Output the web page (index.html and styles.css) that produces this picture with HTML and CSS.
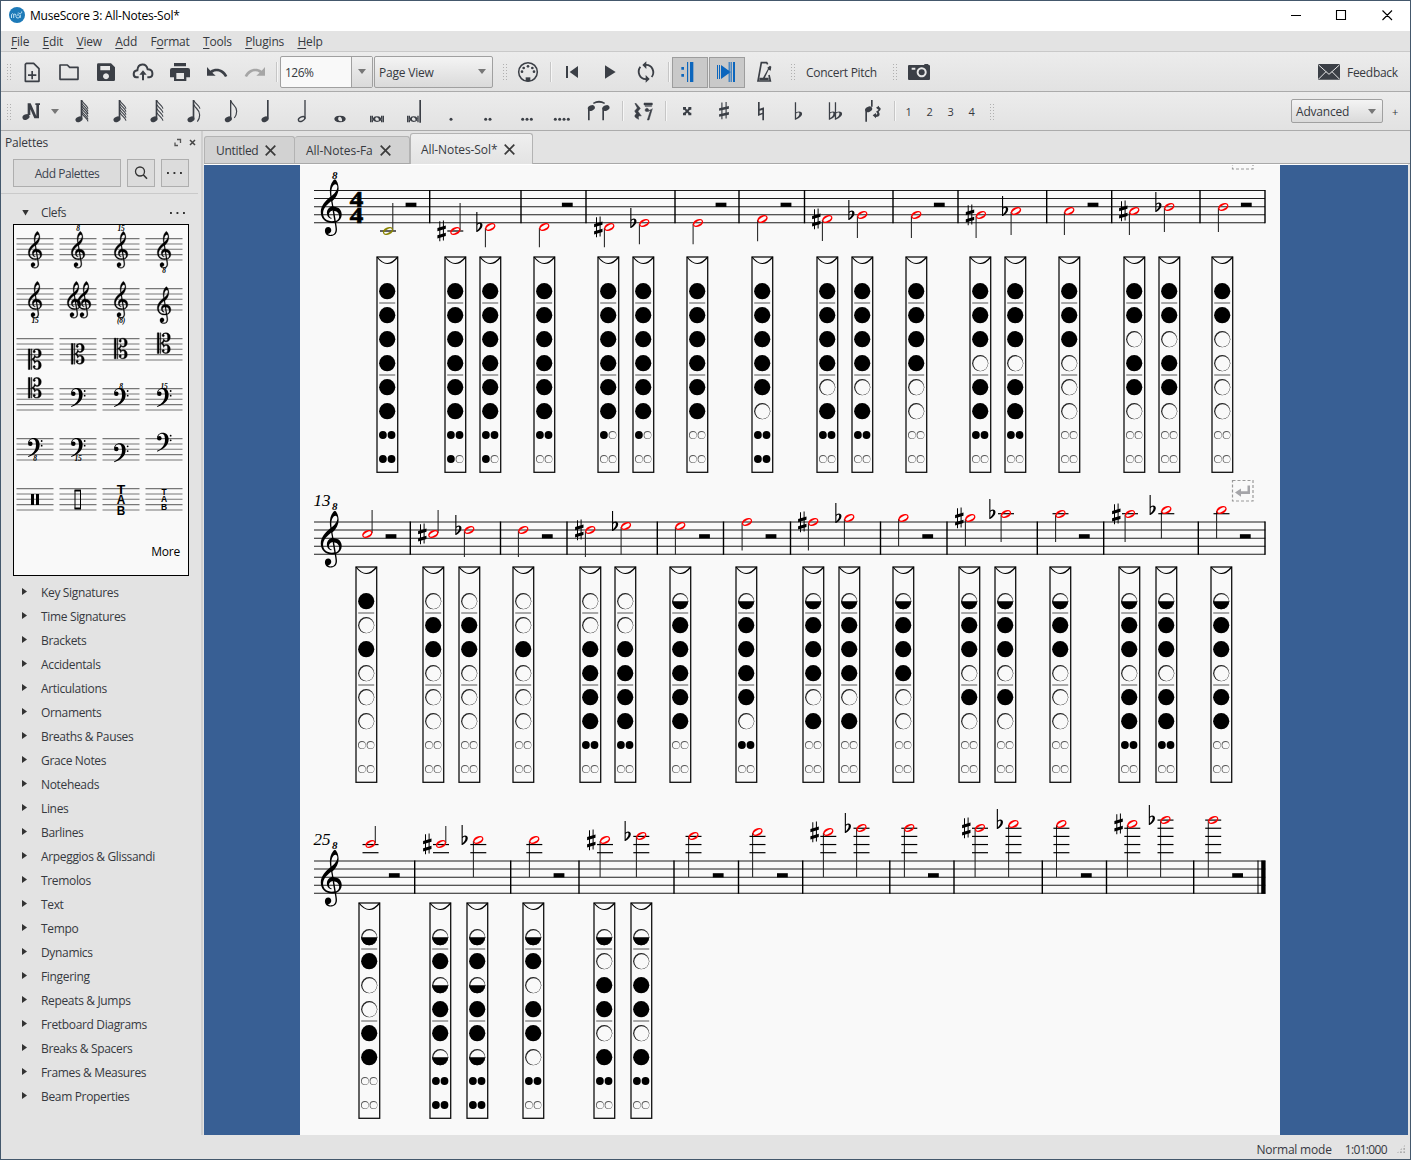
FILE: index.html
```html
<!DOCTYPE html>
<html lang="en">
<head>
<meta charset="utf-8">
<title>MuseScore 3: All-Notes-Sol*</title>
<link rel="stylesheet" href="styles.css">
</head>
<body>
<svg class="defs" width="0" height="0" aria-hidden="true">
  <defs>
    <path id="gclef" transform="scale(1,-1)" fill-rule="evenodd" d="M376 415l25 -145c3 -18 3 -18 29 -18c147 0 241 -113 241 -241c0 -113 -67 -198 -168 -238c-14 -6 -15 -5 -13 -17c11 -62 29 -157 29 -214c0 -170 -130 -200 -197 -200c-151 0 -190 98 -190 163c0 62 40 115 107 115c61 0 96 -47 96 -102c0 -58 -36 -85 -67 -94c-23 -7 -32 -10 -32 -17c0 -13 26 -29 80 -29c59 0 158 18 158 166c0 47 -15 134 -27 201c-2 12 -4 11 -15 9c-20 -4 -46 -6 -69 -6c-245 0 -364 165 -364 339c0 202 153 345 297 464c12 10 11 12 9 24c-7 41 -14 106 -14 164c0 104 24 229 98 311c20 22 51 48 65 48c11 0 37 -28 52 -50c41 -60 65 -146 65 -233c0 -153 -82 -280 -190 -381c-6 -6 -8 -7 -6 -19zM470 943c-61 0 -133 -96 -133 -252c0 -32 2 -66 6 -92c2 -13 6 -14 13 -8c79 69 174 159 174 270c0 55 -27 82 -60 82zM361 262l-28 148c-2 13 -4 12 -14 4c-47 -38 -93 -75 -153 -142c-83 -94 -93 -173 -93 -232c0 -139 113 -236 288 -236c20 0 40 2 56 5c15 3 16 3 14 14l-50 298c-2 11 -4 12 -20 8c-61 -17 -100 -60 -100 -117c0 -46 30 -89 72 -107c7 -3 15 -6 15 -13c0 -6 -4 -11 -12 -11c-7 0 -19 3 -27 6c-68 23 -115 87 -115 177c0 85 57 164 145 194c18 6 18 5 15 24zM430 103l49 -285c2 -12 4 -12 16 -6c56 28 94 79 94 142c0 88 -67 156 -148 163c-12 1 -13 -2 -11 -14z"/>
    <g id="fclef"><circle cx="7" cy="1" r="6.8"/><path d="M0 1C0 -9 7 -16 17 -16C28 -16 35 -8 35 4C35 22 20 34 1 41L0 38.500C15 32 24 21 24 5C24 -6 21 -13 15 -13C9 -13 4 -9 4 -5Z"/><circle cx="41" cy="-7" r="2.700"/><circle cx="41" cy="7" r="2.700"/></g>
    <g id="cclef" stroke="#000" stroke-width="1.200"><path d="M0 -31h5.500v62h-5.500zM9 -31h1.500v62h-1.500z"/><g id="cbowl"><path d="M10.500 0C16 -3 18 -8 19 -13C21 -8 24 -7 27 -7C31 -7 31 -13 31 -18C31 -25 29 -29 25 -29C22 -29 20 -28 19 -26C22 -25 22 -19 18 -19C12 -19 13 -31 26 -31C34 -31 39 -26 39 -18C39 -10 34 -4 27 -4C24 -4 22 -5 21 -6L17 0Z"/></g><use href="#cbowl" transform="scale(1,-1)"/></g>
    <g id="sharp"><path d="M-2.300 -9.700h1v20h-1zM1.300 -10.500h1v20h-1z"/><path d="M-4.200 -3L4.200 -5.500V-2.300L-4.200 .2ZM-4.200 4.200L4.200 1.700V4.900L-4.200 7.400Z"/></g>
    <path id="flat" fill-rule="evenodd" d="M-3 -15h1.100V-3.500C.2 -5.400 3.200 -4.700 3.200 -1.800C3.200 1.200 .6 3.200 -2.200 5L-3 5ZM-1.900 3.200C0 1.500 .9 -.2 .9 -1.900C.9 -3.700 -.8 -3.500 -1.900 -2Z"/>
    <path id="halfhead" fill-rule="evenodd" d="M-4.900 2.280A5.400 3.700 -25 1 1 4.900 -2.280A5.400 3.700 -25 1 1 -4.900 2.280ZM-3.700 2.100A4.250 1.750 -30 1 0 3.700 -2.100A4.250 1.750 -30 1 0 -3.700 2.100Z"/>
    <ellipse id="nhead" rx="11" ry="8" transform="rotate(-24)"/>
    <path id="flag" fill="none" stroke="#3b3f46" stroke-width="3.500" d="M0 0C3 12 18 14 17 31C17 39 14 46 10 51"/>
    <path id="tail" fill="none" stroke="#3b3f46" stroke-width="3.400" d="M0 0C3 9 15 13 18 24"/>
  </defs>
</svg>
<div class="window">
  <header class="titlebar">
    <svg class="logo" viewBox="0 0 16 16" width="16" height="16"><circle cx="8" cy="8" r="8" fill="#1d7ab8"/><path d="M2.500 11V7.500q1.300 -1.600 2.200 0V11M4.700 7.800q1.300 -1.800 2.300 0V9.500q.2 1.800 2.200 1.500q2 -.3 2 -2.500M9 9V6.500M9.300 5.500a1.800 1.500 0 1 0 3.400 -1M11.200 11V7.500" fill="none" stroke="#cfeaf8" stroke-width=".9"/></svg>
    <span class="title-text">MuseScore 3: All-Notes-Sol*</span>
    <svg class="winctl" viewBox="0 0 102 12" width="102" height="12"><path d="M0 6.500H10M45.500 1.500h9v9h-9zM91.500 1.500l9.500 9.500M101 1.500l-9.500 9.500" fill="none" stroke="#000" stroke-width="1.100"/></svg>
  </header>
  <nav class="menubar">
    <span><u>F</u>ile</span><span><u>E</u>dit</span><span><u>V</u>iew</span><span><u>A</u>dd</span><span>F<u>o</u>rmat</span><span><u>T</u>ools</span><span><u>P</u>lugins</span><span><u>H</u>elp</span>
  </nav>
  <div class="toolbar main-tools">
    <i class="grip"></i>
    <svg class="tb" viewBox="39 156 111 114"><path d="M79 187H101L117 203V241H76V190Z" fill="none" stroke-width="5" stroke-linejoin="round" stroke="#3b3f46"/><path d="M94 210h5v10h10v5h-10v10h-5v-10h-10v-5h10z"/></svg>
    <svg class="tb" viewBox="150 156 111 114"><path d="M180 192H202L209 199H234V235H180Z" fill="none" stroke-width="5" stroke-linejoin="round" stroke="#3b3f46"/></svg>
    <svg class="tb" viewBox="261 156 111 114"><path fill-rule="evenodd" d="M295 187H333L345 199V236Q345 240 341 240H295Q291 240 291 236V191Q291 187 295 187ZM301 195V208H330V195ZM318 217a9 9 0 1 0 .1 0Z"/></svg>
    <svg class="tb" viewBox="372 156 111 114"><path d="M416 229H409C398 227 398 209 412 208C414 185 439 185 443 205C461 205 461 227 448 229H442" fill="none" stroke="#3b3f46" stroke-width="6"/><path d="M426 238V221H418L429 208L440 221H432V238Z"/></svg>
    <svg class="tb" viewBox="483 156 111 114"><path fill-rule="evenodd" d="M522 186H558V196H522ZM516 201H564Q570 201 570 207V229H559V240H522V229H510V207Q510 201 516 201ZM529 216V234H552V216Z"/></svg>
    <svg class="tb" viewBox="594 156 111 114"><path d="M621 198V224H647L637 215C650 207 665 211 675 228L682 225C672 204 649 198 631 209Z"/></svg>
    <svg class="tb dim" viewBox="705 156 111 114"><path d="M795 198V224H769L779 215C766 207 751 211 741 228L734 225C744 204 767 198 785 209Z"/></svg>
    <i class="sep s1"></i>
    <div class="zoombox"><span>126%</span><b></b></div>
    <div class="select view"><span>Page View</span><i class="caret"></i></div>
    <i class="grip g2"></i>
    <svg class="tb" viewBox="60 156 111 114"><circle cx="114" cy="213" r="28" fill="none" stroke="#3b3f46" stroke-width="4.500"/><circle cx="96" cy="212" r="4"/><circle cx="101" cy="201" r="4"/><circle cx="114" cy="196" r="4"/><circle cx="127" cy="201" r="4"/><circle cx="132" cy="212" r="4"/><path d="M107 229h14v12h-14z"/></svg>
    <i class="sep s2"></i>
    <svg class="tb" viewBox="192 156 111 114"><path d="M228 195h6v36h-6zM264 195V231L239 213Z"/></svg>
    <svg class="tb" viewBox="303 156 111 114"><path d="M345 193V233L377 213Z"/></svg>
    <svg class="tb" viewBox="414 156 111 114"><path d="M466 192C487 190 496 214 485 228M470 234C449 236 440 213 451 197" fill="none" stroke="#3b3f46" stroke-width="5.500"/><path d="M469 181V204L457 192ZM467 222V245L479 234Z"/></svg>
    <i class="sep s2"></i>
    <svg class="tb on" viewBox="546 156 108 114"><path d="M574 198h8v8h-8zM574 219h8v8h-8zM591 183h3.500v60h-3.500zM600 183h10v60h-10z"/></svg>
    <svg class="tb on" viewBox="657 156 108 114"><path d="M681 192h3v42h-3zM687 192h3v42h-3zM693 192L722 213L693 234ZM716 183h3v60h-3zM722 183h3v60h-3zM729 183h6v60h-6z"/></svg>
    <svg class="tb" viewBox="768 156 111 114"><path d="M833 190L830 185H814L804 240H841L837 222" fill="none" stroke="#3b3f46" stroke-width="5"/><path d="M808 230h28v8h-28zM819 230L834 203L832 200L840 194L844 197L842 209L836 206L824 232Z"/></svg>
    <i class="grip g3"></i>
    <span class="label concert">Concert Pitch</span>
    <i class="grip g4"></i>
    <svg class="tb" viewBox="1233 156 111 114"><path fill-rule="evenodd" d="M1257 192H1303V189H1315V192H1317Q1320 192 1320 196V233Q1320 237 1317 237H1257Q1254 237 1254 233V196Q1254 192 1257 192ZM1265 200V206H1276V200ZM1295 199a15 15 0 1 0 .1 0Z"/><circle cx="1295" cy="214" r="9"/></svg>
    <svg class="tb mail" viewBox="0 0 66 48" ><rect width="66" height="47" rx="3"/><path d="M2 3L24 23L2 45M64 3L42 23L64 45M24 23L33 31L42 23" fill="none" stroke="#e8e8e8" stroke-width="3"/></svg>
    <span class="label feedback">Feedback</span>
  </div>
  <div class="toolbar note-tools">
    <i class="grip"></i>
    <svg class="tb" viewBox="39 276 111 114"><path d="M83 310h8v35h-8zM83 310h9L112 355H103ZM106 310h14v5h-3v40h-8V315h-3z"/><use href="#nhead" x="0" y="0" transform="translate(78 351)"/></svg>
    <i class="caret n"></i>
    <svg class="tb" viewBox="192 276 111 114"><use href="#nhead" transform="translate(237 358)"/><path d="M242 300h5v56h-5z"/><g transform="translate(246 302)"><use href="#tail"/><use href="#tail" y="8"/><use href="#tail" y="16"/><use href="#tail" y="24"/><use href="#tail" y="32"/><use href="#tail" y="38"/></g></svg>
    <svg class="tb" viewBox="303 276 111 114"><use href="#nhead" transform="translate(351 358)"/><path d="M356 300h5v56h-5z"/><g transform="translate(360 302)"><use href="#tail"/><use href="#tail" y="9"/><use href="#tail" y="18"/><use href="#tail" y="27"/><use href="#tail" y="36"/></g></svg>
    <svg class="tb" viewBox="414 276 111 114"><use href="#nhead" transform="translate(462 358)"/><path d="M467 300h5v56h-5z"/><g transform="translate(471 302)"><use href="#tail"/><use href="#tail" y="12"/><use href="#tail" y="24"/><use href="#tail" y="36"/></g></svg>
    <svg class="tb" viewBox="525 276 111 114"><use href="#nhead" transform="translate(573 358)"/><path d="M578 300h5v56h-5z"/><g transform="translate(582 302)"><use href="#tail"/><use href="#flag" y="12"/></g></svg>
    <svg class="tb" viewBox="636 276 111 114"><use href="#nhead" transform="translate(685 358)"/><path d="M690 300h4v56h-4z"/><use href="#flag" x="693" y="303"/></svg>
    <svg class="tb" viewBox="747 276 111 114"><use href="#nhead" transform="translate(795 358)"/><path d="M801 300h5v56h-5z"/></svg>
    <svg class="tb" viewBox="858 276 111 114"><ellipse cx="905" cy="357" rx="10.500" ry="6" transform="rotate(-27 905 357)" fill="none" stroke="#3b3f46" stroke-width="4"/><path d="M913 300h4v56h-4z"/></svg>
    <svg class="tb" viewBox="969 276 111 114"><path fill-rule="evenodd" d="M1020 347a17 10 0 1 0 .1 0ZM1019 350q8 2 7 13q-6 2 -11 -3q-2 -9 4 -10Z"/></svg>
    <svg class="tb" viewBox="1080 276 111 114"><path fill-rule="evenodd" d="M1110 347h4v20h-4zM1115 347h4v20h-4zM1143 347h4v20h-4zM1148 347h4v20h-4zM1131 349a13 8.500 0 1 0 .1 0ZM1130 352q8 2 6 10q-6 2 -10 -3q-2 -6 4 -7Z"/></svg>
    <svg class="tb" viewBox="1191 276 111 114"><path fill-rule="evenodd" d="M1221 347h4v20h-4zM1226 347h4v20h-4zM1252 347h4v20h-4zM1258 300h5v68h-5zM1241 349a12 8.500 0 1 0 .1 0ZM1240 352q8 2 6 10q-6 2 -10 -3q-2 -6 4 -7Z"/></svg>
    <svg class="tb" viewBox="1302 276 111 114"><circle cx="1353" cy="358" r="4.500"/></svg>
    <svg class="tb" viewBox="1413 276 111 114"><circle cx="1457" cy="358" r="4.500"/><circle cx="1470" cy="358" r="4.500"/></svg>
    <svg class="tb" viewBox="54 276 111 114"><circle cx="98" cy="358" r="4.500"/><circle cx="111" cy="358" r="4.500"/><circle cx="124" cy="358" r="4.500"/></svg>
    <svg class="tb" viewBox="165 276 111 114"><circle cx="196" cy="358" r="4.500"/><circle cx="209" cy="358" r="4.500"/><circle cx="222" cy="358" r="4.500"/><circle cx="235" cy="358" r="4.500"/></svg>
    <svg class="tb" viewBox="276 276 111 114"><path d="M294 323h5v38h-5zM337 323h5v38h-5zM309 308Q327 297 345 308L343 312Q327 304 311 312Z"/><use href="#nhead" transform="translate(304 324)"/><use href="#nhead" transform="translate(348 324)"/></svg>
    <i class="sep t1"></i>
    <svg class="tb" viewBox="405 276 111 114"><path stroke="#3b3f46" stroke-width="1.500" d="M437 309L451 325L444 334L454 348Q442 345 446 358Q427 350 439 341L434 333L442 324L435 311ZM462 309h25v6h-25zM465 317h20v2h-20zM482 329L472 360H477L487 326Q482 332 476 332A5.500 5.500 0 1 0 467 334Q475 337 482 329Z"/></svg>
    <i class="sep t2"></i>
    <svg class="tb" viewBox="537 276 111 114"><path d="M583 325L600 342M600 325L583 342" stroke="#3b3f46" stroke-width="6"/><path d="M579 321h9v8h-9zM595 321h9v8h-9zM579 338h9v8h-9zM595 338h9v8h-9z"/></svg>
    <svg class="tb" viewBox="648 276 111 114"><use href="#sharp" transform="translate(702 332) scale(3.500 2.500)"/></svg>
    <svg class="tb" viewBox="759 276 111 114"><path d="M804 306h5v20l13 -4v39h-5V343l-13 5ZM809 332v9l8 -3v-8Z" fill-rule="evenodd"/></svg>
    <svg class="tb" viewBox="870 276 111 114"><use href="#flat" transform="translate(925 346) scale(3.500 2.600)"/></svg>
    <svg class="tb" viewBox="981 276 111 114"><use href="#flat" transform="translate(1027 346) scale(3.500 2.600)"/><use href="#flat" transform="translate(1045 346) scale(3.500 2.600)"/></svg>
    <svg class="tb" viewBox="1092 276 111 114"><path d="M1126 328h5v37h-5zM1143 300h5v20h-5zM1158 323L1167 317V321Q1178 326 1166 335Q1175 348 1158 351V355L1148 346L1158 339V344Q1166 342 1158 335Q1168 329 1167 327V331Z"/><use href="#nhead" transform="translate(1136 328)"/></svg>
    <i class="sep t3"></i>
    <span class="num">1</span><span class="num">2</span><span class="num">3</span><span class="num">4</span>
    <i class="grip g5"></i>
    <div class="select adv"><span>Advanced</span><i class="caret"></i></div>
    <span class="plus">+</span>
  </div>
  <main class="work">
    <aside class="dock">
      <div class="dock-title"><span>Palettes</span>
        <svg viewBox="0 0 24 10" width="24" height="10"><path d="M4 1.500h3.500v3.500M2 4.500v3h3" fill="none" stroke="#555" stroke-width="1.300"/><path d="M17 2l5 5M22 2l-5 5" fill="none" stroke="#444" stroke-width="1.500"/></svg>
      </div>
      <div class="dock-buttons">
        <button class="btn add">Add Palettes</button>
        <button class="btn sq"><svg viewBox="0 0 14 14" width="14" height="14"><circle cx="6" cy="5.500" r="4.500" fill="none" stroke="#333" stroke-width="1.300"/><path d="M9.300 8.800L13 12.800" stroke="#333" stroke-width="1.600"/></svg></button>
        <button class="btn sq"><i class="dots"></i></button>
      </div>
      <div class="palette-head"><i class="tri down"></i><span>Clefs</span><i class="dots"></i></div>
      <div class="clefs"><div class="clef-grid" id="clefs"></div><div class="more">More</div></div>
      <ul class="palette-list" id="palettes"></ul>
    </aside>
    <section class="docs">
      <div class="tabs">
        <div class="tab a"><span>Untitled</span><svg class="x" viewBox="0 0 11 11"><path d="M.7 .7l9.600 9.600M10.300 .7L.7 10.300"/></svg></div>
        <div class="tab b"><span>All-Notes-Fa</span><svg class="x" viewBox="0 0 11 11"><path d="M.7 .7l9.600 9.600M10.300 .7L.7 10.300"/></svg></div>
        <div class="tab c active"><span>All-Notes-Sol*</span><svg class="x" viewBox="0 0 11 11"><path d="M.7 .7l9.600 9.600M10.300 .7L.7 10.300"/></svg></div>
      </div>
      <div class="canvas"><svg id="score" class="page" viewBox="300 165 980 970" width="980" height="970"></svg></div>
    </section>
  </main>
  <footer class="status"><span>Normal mode</span><span class="pos">1:01:000</span><i class="sizegrip"></i></footer>
</div>
<script src="score.js"></script>
</body>
</html>
```
FILE: styles.css
```css
* { box-sizing: border-box; }
body { margin: 0; font: 12px "Open Sans", "Noto Sans", sans-serif; color: #36393f; letter-spacing: -0.2px; }
.defs { position: absolute; }
.window { width: 1411px; height: 1160px; border: 1px solid #44586c; background: #e3e3e3; display: flex; flex-direction: column; overflow: hidden; }
i { font-style: normal; display: block; flex: none; }
svg { display: block; flex: none; }

.titlebar { height: 30px; background: #fff; color: #000; display: flex; align-items: center; padding: 0 17px 2px 8px; letter-spacing: -0.23px; }
.title-text { margin-left: 5px; }
.winctl { margin-left: auto; }

.menubar { height: 21px; display: flex; align-items: center; gap: 13.4px; padding: 1px 10px 0; border-bottom: 1px solid #c9c9c9; }
.menubar u { text-underline-offset: 2px; }

.toolbar { display: flex; align-items: center; background: linear-gradient(#ececec, #e2e2e2); border-bottom: 1px solid #ababab; }
.main-tools { height: 40px; padding-left: 5px; }
.note-tools { height: 39px; padding-left: 5px; }
.tb { width: 37px; height: 38px; fill: #3b3f46; }
.dim { fill: #a6a6a6; }
.on { width: 36px; height: 38px; fill: #0c66bd; margin-right: 1px; background: linear-gradient(#9d9d9d, #9d9d9d) 0 4px / 36px 1px no-repeat, linear-gradient(#9d9d9d, #9d9d9d) 0 34px / 36px 1px no-repeat, linear-gradient(#9d9d9d, #9d9d9d) 0 4px / 1px 31px no-repeat, linear-gradient(#9d9d9d, #9d9d9d) 35px 4px / 1px 31px no-repeat, linear-gradient(#c9c9c9, #c9c9c9) 0 4px / 36px 31px no-repeat; }
.grip { width: 6px; height: 17px; margin-right: 1px; background: radial-gradient(circle, #b0b0b0 .6px, transparent 1px) 0 0 / 3px 3px; }
.sep { width: 2px; height: 20px; background: #c6c6c6; border-right: 1px solid #f6f6f6; }
.s1 { margin: 0 2px 0 4px; }
.s2 { margin: 0 2px 0 3px; }
.zoombox { width: 93px; height: 32px; border: 1px solid #a0a0a0; border-radius: 2px; background: #f9f9f9; display: flex; align-items: center; justify-content: space-between; padding-left: 4px; }
.zoombox b { width: 21px; height: 30px; border-left: 1px solid #a0a0a0; background: linear-gradient(#f0f0f0, #dadada); display: flex; align-items: center; justify-content: center; }
.zoombox span, .view span { padding-top: 2px; }
.zoombox span { letter-spacing: -0.5px; }
.zoombox b::after, .caret { content: ""; width: 0; height: 0; border: 4px solid transparent; border-top: 5px solid #777; border-bottom: 0; }
.select { border: 1px solid #a0a0a0; border-radius: 2px; background: linear-gradient(#f4f4f4, #dadada); display: flex; align-items: center; justify-content: space-between; padding: 0 6px 0 4px; }
.view { width: 119px; height: 32px; margin-left: 1px; }
.adv { width: 92px; height: 24px; margin-left: 296px; }
.g2 { margin: 0 2px 0 9px; }
.g3 { margin: 0 0 0 7px; }
.label { padding-top: 2px; }
.concert { margin-left: 10px; width: 71px; white-space: nowrap; letter-spacing: -0.28px; }
.g4 { margin: 0 3px 0 15px; }
.mail { width: 22px; height: 16px; margin-left: 380px; }
.feedback { margin-left: 7px; letter-spacing: -0.28px; }
.caret.n { margin: 0 5px 0 1px; }
.t1 { margin: 0 1px 0 3px; }
.t2 { margin: 0 2px 0 3px; }
.t3 { margin: 0 2px 0 3px; }
.num { width: 21px; text-align: center; font-size: 11px; padding-top: 1px; }
.g5 { margin: 0 0 0 7px; }
.plus { margin-left: 9px; font-size: 11px; padding-top: 1px; }

.work { flex: 1; display: flex; min-height: 0; }
.dock { width: 202px; border-right: 2px solid #cfcfcf; }
.dock-title { height: 28px; padding: 4px 4px 0 4px; display: flex; align-items: center; justify-content: space-between; padding-bottom: 9px; }
.dock-buttons { display: flex; gap: 6px; padding: 0 0 6px 12px; margin: 0 3px 0 0; border-bottom: 1px solid #cacaca; }
.btn { font: inherit; letter-spacing: -0.45px; color: #3d4450; height: 28px; border: 1px solid #aeaeae; background: #dcdcdc; padding: 0; display: flex; align-items: center; justify-content: center; }
.add { width: 108px; padding-top: 1px; }
.sq { width: 28px; }
.dots { width: 16px; height: 2px; background: radial-gradient(circle at 1px 1px, #333 1px, transparent 1.3px) 0 0 / 6.500px 2px; }
.palette-head { height: 30px; display: flex; align-items: center; padding: 7px 15px 0 21px; letter-spacing: -0.4px; }
.palette-head span { margin-left: 12px; flex: 1; }
.tri { width: 7px; height: 6px; background: #333; }
.down { clip-path: polygon(0 0, 100% 0, 50% 100%); }
.clefs { width: 176px; height: 352px; margin-left: 12px; border: 1px solid #000; background: #f9f9f9; color: #000; }
.clef-grid { display: grid; grid-template-columns: repeat(4, 43px); grid-auto-rows: 50px; }
.more { text-align: right; padding: 18px 8px 0 0; letter-spacing: -0.2px; }
.palette-list { list-style: none; margin: 4px 0 0; padding: 0 0 0 21px; letter-spacing: -0.34px; }
.palette-list li { height: 24px; display: flex; align-items: center; gap: 12px; padding-top: 1px; }
.palette-list li::before { content: ""; width: 5px; height: 7px; background: #333; clip-path: polygon(0 0, 100% 50%, 0 100%); margin: -2px 2px 0 0; }

.docs { flex: 1; display: flex; flex-direction: column; min-width: 0; }
.tabs { height: 33px; display: flex; align-items: flex-end; border-bottom: 1px solid #a9a9a9; flex: none; margin-left: 1px; }
.tab { height: 27px; display: flex; align-items: center; gap: 7px; padding: 0 0 0 11px; border: 1px solid #b3b3b3; border-bottom: 0; border-left-width: 0; border-radius: 3px 3px 0 0; background: #d2d2d2; }
.tab span { padding-top: 1px; }
.a { width: 91px; border-left-width: 1px; letter-spacing: -0.3px; }
.b { width: 115px; letter-spacing: -0.04px; }
.c { width: 123px; height: 31px; margin-bottom: -1px; padding: 0 0 0 10px; background: linear-gradient(#efefef, #e3e3e3); border-left-width: 1px; letter-spacing: -0.1px; }
.x { width: 11px; height: 11px; fill: none; stroke: #3b3b3b; stroke-width: 1.7; }
.canvas { flex: 1; width: 1204px; margin: 0 2px 0 1px; background: #385f94; padding-left: 96px; border-top: 1px solid #fff; overflow: hidden; }
.page { background: #f9f9f9; }
.status { height: 24px; display: flex; align-items: center; justify-content: flex-end; gap: 13px; padding: 4px 4px 0 0; }
.pos { letter-spacing: -0.65px; }
.sizegrip { width: 10px; height: 10px; margin-left: -4px; background: radial-gradient(circle, #aaa .7px, transparent 1px) 0 0 / 3.300px 3.300px; clip-path: polygon(100% 0, 100% 100%, 0 100%); }

.music-digits { font: bold 24px "Liberation Serif", serif; letter-spacing: 0; stroke: #000; stroke-width: .7px; }
.octave { font: italic bold 11px "Liberation Serif", serif; letter-spacing: 0; }
.measure-no { font: italic 17px "Liberation Serif", serif; letter-spacing: 0; }
.clef-mark { font: italic bold 7.500px "Liberation Serif", serif; letter-spacing: -0.3px; }
.tab-letters { font: bold 13.500px "Liberation Sans", sans-serif; letter-spacing: 0; }
.tab-small { font: bold 8.500px "Liberation Sans", sans-serif; letter-spacing: 0; }
```
FILE: score.js
```js
// Each note is [x, y, stemEndY, accidental]; each chart is [x, "six holes" + "two double holes"].
const systems = [
  {
    top: 190.5, end: 1265, chartTop: 257, ledgerLow: 231,
    bars: [429.7, 521, 586, 675, 739, 804.5, 893, 958, 1046.7, 1111.7, 1200, 1265],
    rests: [411, 567.3, 721, 786, 939.3, 1093, 1246.3],
    notes: [[388, 231, 203, ''], [455.3, 231, 203, '#'], [490.3, 227, 247.3, 'b'], [544.3, 227, 247.3, ''],
      [609.3, 227, 247.3, '#'], [644.3, 223, 244.3, 'b'], [698, 223, 244.3, ''], [762.5, 219, 241.3, ''],
      [827.3, 219, 241, '#'], [862.3, 215, 238, 'b'], [916.3, 215, 238, ''], [981, 215, 238, '#'],
      [1016, 211, 235, 'b'], [1069.3, 211, 235, ''], [1134.3, 211, 235, '#'], [1169.3, 207, 232, 'b'], [1223.3, 207, 232, '']],
    charts: [[387.2, 'FFFFFFFFFF'], [455.2, 'FFFFFFFFFO'], [490.2, 'FFFFFFFFFO'], [544.2, 'FFFFFFFFOO'],
      [608.2, 'FFFFFFFOOO'], [643.2, 'FFFFFFFOOO'], [697.2, 'FFFFFFOOOO'], [762.2, 'FFFFFOFFFF'],
      [827.2, 'FFFFOFFFOO'], [862.2, 'FFFFOFFFOO'], [916.2, 'FFFFOOOOOO'], [980.2, 'FFFOFFFFOO'],
      [1015.2, 'FFFOFFFFOO'], [1069.2, 'FFFOOOOOOO'], [1134.2, 'FFOFFOOOOO'], [1169.2, 'FFOFFOOOOO'], [1222.2, 'FFOOOOOOOO']]
  },
  {
    top: 522, end: 1265.3, chartTop: 567, number: '13',
    bars: [410.3, 500.5, 567, 657.3, 723.5, 790.5, 880.5, 947, 1037.3, 1103.7, 1198.3, 1265],
    rests: [391, 547.3, 704.5, 771, 927.7, 1084.3, 1245.3],
    notes: [[367.3, 534, 510, ''], [433.3, 534, 510, '#'], [469.3, 530, 557, 'b'], [523.3, 530, 557, ''],
      [590.3, 530, 557, '#'], [626, 526, 554.5, 'b'], [680.3, 526, 554.5, ''], [747, 522, 550.5, ''],
      [813.3, 522, 550.5, '#'], [849.3, 518, 546, 'b'], [903.5, 518, 546, ''], [970.3, 518, 546, '#'],
      [1006, 514, 542, 'b'], [1060.5, 514, 542, ''], [1130, 514, 542, '#'], [1166.3, 510, 538.5, 'b'], [1221.5, 510, 538.5, '']],
    charts: [[366.2, 'FOFOOOOOOO'], [433.2, 'OFFOOOOOOO'], [469.2, 'OFFOOOOOOO'], [523.2, 'OOFOOOOOOO'],
      [590.2, 'OOFFFFFFOO'], [625.2, 'OOFFFFFFOO'], [680.2, 'HFFFFFOOOO'], [746.2, 'HFFFFOFFOO'],
      [813.2, 'HFFFOFOOOO'], [849.2, 'HFFFOFOOOO'], [903.2, 'HFFFOOOOOO'], [969.2, 'HFFOFOOOOO'],
      [1005.2, 'HFFOFOOOOO'], [1060.2, 'HFFOOOOOOO'], [1129.2, 'HFFOFFFFOO'], [1166.2, 'HFFOFFFFOO'], [1221.2, 'HFFOFFOOOO']]
  },
  {
    top: 861, end: 1265.3, chartTop: 903, number: '25', final: true,
    bars: [414.7, 510.7, 579, 674, 738.5, 802.7, 889.8, 954, 1042.3, 1106.5, 1193.7],
    rests: [394.3, 559, 718.2, 782.4, 933.4, 1086.3, 1237.6],
    notes: [[370.5, 844, 826, ''], [441, 844, 826, '#'], [478.3, 840, 877, 'b'], [534.3, 840, 877, ''],
      [605, 840, 877, '#'], [641.3, 836, 877, 'b'], [693.5, 836, 877, ''], [757.5, 832, 877, ''],
      [828.3, 832, 877, '#'], [861.5, 828, 877, 'b'], [909.3, 828, 877, ''], [980, 828, 877, '#'],
      [1013.5, 824, 877, 'b'], [1061.4, 824, 877, ''], [1132.3, 824, 877, '#'], [1165.5, 820, 877, 'b'], [1213.2, 820, 877, '']],
    charts: [[369.2, 'HFOOFFOOOO'], [440.2, 'HFHFFHFFFF'], [477.2, 'HFHFFHFFFF'], [533.2, 'HFOFFOFFOO'],
      [604.2, 'HOFFOFFFOO'], [641.2, 'HOFFOFFFOO']]
  }
];

const line = (x1, y1, x2, y2, w, c = '#000') =>
  `<line x1="${x1}" y1="${y1}" x2="${x2}" y2="${y2}" stroke="${c}" stroke-width="${w}"/>`;

function hole(x, y, state, r) {
  if (state === 'F') return `<circle cx="${x}" cy="${y}" r="${r + .1}"/>`;
  const big = r > 5;
  let s = `<circle cx="${x}" cy="${y}" r="${r + .1}" fill="${big ? '#222' : '#555'}"/>` +
    `<circle cx="${x + (big ? .4 : .25)}" cy="${y + (big ? .4 : .25)}" r="${r - (big ? .7 : .5)}" fill="#f9f9f9"/>`;
  if (state === 'H') s += `<path d="M${x - r} ${y + .1}H${x + r}A${r} ${r} 0 0 1 ${x - r} ${y + .1}Z"/>`;
  return s;
}

function chart(x, top, code) {
  let s = `<rect x="${x - 10.2}" y="${top}" width="20.700" height="215.300" fill="none" stroke="#111" stroke-width="1.300"/>` +
    `<path d="M${x - 10.2} ${top}Q${x} ${top + 13} ${x + 10.5} ${top}" fill="none" stroke="#000" stroke-width="1.200"/>`;
  for (let i = 0; i < 6; i++) s += hole(x, top + 34.200 + i * 24, code[i], 8);
  for (let i = 0; i < 4; i++) s += hole(x + (i % 2 ? 4.300 : -4.300), top + 178 + (i > 1 ? 24 : 0), code[6 + i], 3.8);
  s += line(x - 8, top + 46, x + 8, top + 46, 1.5, '#8c8c8c') + line(x - 8, top + 118, x + 8, top + 118, 1.5, '#8c8c8c');
  return s;
}

function drawSystem(sys, index) {
  let s = '';
  const bottom = sys.top + 32.3;
  for (let i = 0; i < 5; i++) s += line(314, sys.top + i * 8.08, sys.end, sys.top + i * 8.08, 1.05, '#1c1c1c');
  s += `<g transform="translate(320.800 ${sys.top + 24.3}) scale(.0312 .0323)"><use href="#gclef"/></g>`;
  s += `<text class="octave" x="332" y="${sys.top - 11.700}">8</text>`;
  if (sys.number) s += `<text class="measure-no" x="313.500" y="${sys.top - 16}">${sys.number}</text>`;
  if (index === 0) {
    for (const y of [16, 32.2])
      s += `<text class="music-digits" x="349.800" y="${sys.top + y}" textLength="13.500" lengthAdjust="spacingAndGlyphs">4</text>`;
  }
  for (const x of sys.bars) s += line(x, sys.top - .5, x, bottom + .5, 1.4);
  if (sys.final) s += line(1258, sys.top - .5, 1258, bottom + .5, 1.1) + line(1263.4, sys.top - .5, 1263.4, bottom + .5, 4.4);
  // Half rests sit on the middle line.
  for (const x of sys.rests) s += `<rect x="${x - 5.400}" y="${sys.top + 12.200}" width="10.800" height="4.200"/>`;
  sys.notes.forEach(([x, y, end, acc], i) => {
    const ledgers = [];
    if (y > bottom + 6) ledgers.push(y);
    for (let l = sys.top - 8.3; l >= y - 1; l -= 8.15) ledgers.push(l);
    const up = end < y;
    const sx = up ? x + 4.800 : x - 4.900;
    s += line(sx, up ? y - 1 : y + 1, sx, end, 1.05, '#222');
    for (const l of ledgers) s += line(x - 8, l, x + 8, l, 1.2);
    s += `<use href="#halfhead" x="${x}" y="${y}" fill="${index === 0 && i === 0 ? '#8a8400' : '#f00'}"/>`;
    const ax = x - (ledgers.length ? 13.7 : 11);
    if (acc) s += `<use href="#${acc === '#' ? 'sharp' : 'flat'}" x="${ax}" y="${y}"/>`;
  });
  for (const [x, code] of sys.charts) s += chart(x, sys.chartTop, code);
  return s;
}

function lineBreak(y) {
  return `<rect x="1232.500" y="${y}" width="20.500" height="20.500" fill="none" stroke="#999" stroke-width="1.200" stroke-dasharray="3 2"/>` +
    `<path d="M1235 ${y + 12}l6 -4v2.800h6.500v-5.800h2.500v8.500h-9v2.800z" fill="#a5a5a9"/>`;
}

document.getElementById('score').innerHTML =
  systems.map(drawSystem).join('') + lineBreak(148.5) + lineBreak(480.5);

// Clef palette: [glyph, line shift in staff spaces, mark, mark y].
const clefs = [
  ['g', 3], ['g', 3, '8', 5.5], ['g', 3, '15', 5.5], ['g', 3, '8', 48],
  ['g', 3, '15', 48], ['gg', 3], ['g', 3, '(8)', 48], ['g', 4],
  ['c', 4], ['c', 3], ['c', 2], ['c', 1],
  ['c', 0], ['f', 1], ['f', 1, '8', 14], ['f', 1, '15', 14],
  ['f', 1, '8', 35.5], ['f', 1, '15', 35.5], ['f', 2], ['f', 0],
  ['perc'], ['box'], ['tab'], ['tabs']
];
document.getElementById('clefs').innerHTML = clefs.map(([g, n, mark, my]) => {
  let s = '';
  for (let i = 0; i < 5; i++) s += line(2.5, 13.6 + i * 5.35, 39.5, 13.6 + i * 5.35, 1.1, '#777');
  const y = 13.4 + (n || 0) * 5.35;
  const treble = x => `<g transform="translate(${x} ${y}) scale(.0202 .0210)" stroke="#000" stroke-width="14"><use href="#gclef"/></g>`;
  if (g === 'g') s += treble(14.3);
  if (g === 'gg') s += treble(10.3) + treble(20.3);
  if (g === 'c') s += `<g transform="translate(14.300 ${y - .6}) scale(.333)"><use href="#cclef"/></g>`;
  if (g === 'f') s += `<g transform="translate(14 ${y - .4}) scale(.333)"><use href="#fclef"/></g>`;
  if (g === 'perc') s += '<path d="M17 19h3v11h-3zM22 19h3v11h-3z"/>';
  if (g === 'box') s += '<path d="M18 15.500v18M23.500 15.500v18" stroke="#000" fill="none"/><path d="M17.500 14.500h6.500v2h-6.500zM17.500 32.500h6.500v2h-6.500z"/>';
  if (g === 'tab') s += ['T', 'A', 'B'].map((c, i) => `<text class="tab-letters" text-anchor="middle" x="21" y="${18.500 + i * 10.7}" textLength="8.500" lengthAdjust="spacingAndGlyphs">${c}</text>`).join('');
  if (g === 'tabs') s += ['T', 'A', 'B'].map((c, i) => `<text class="tab-small" text-anchor="middle" x="21" y="${19.500 + i * 7.5}">${c}</text>`).join('');
  if (mark) s += `<text class="clef-mark" text-anchor="middle" x="21" y="${my}">${mark}</text>`;
  return `<svg width="43" height="50" viewBox="0 0 43 50">${s}</svg>`;
}).join('');

document.getElementById('palettes').innerHTML = ['Key Signatures', 'Time Signatures', 'Brackets', 'Accidentals',
  'Articulations', 'Ornaments', 'Breaths & Pauses', 'Grace Notes', 'Noteheads', 'Lines', 'Barlines',
  'Arpeggios & Glissandi', 'Tremolos', 'Text', 'Tempo', 'Dynamics', 'Fingering', 'Repeats & Jumps',
  'Fretboard Diagrams', 'Breaks & Spacers', 'Frames & Measures', 'Beam Properties']
  .map(n => `<li>${n.replace('&', '&amp;')}</li>`).join('');
```
